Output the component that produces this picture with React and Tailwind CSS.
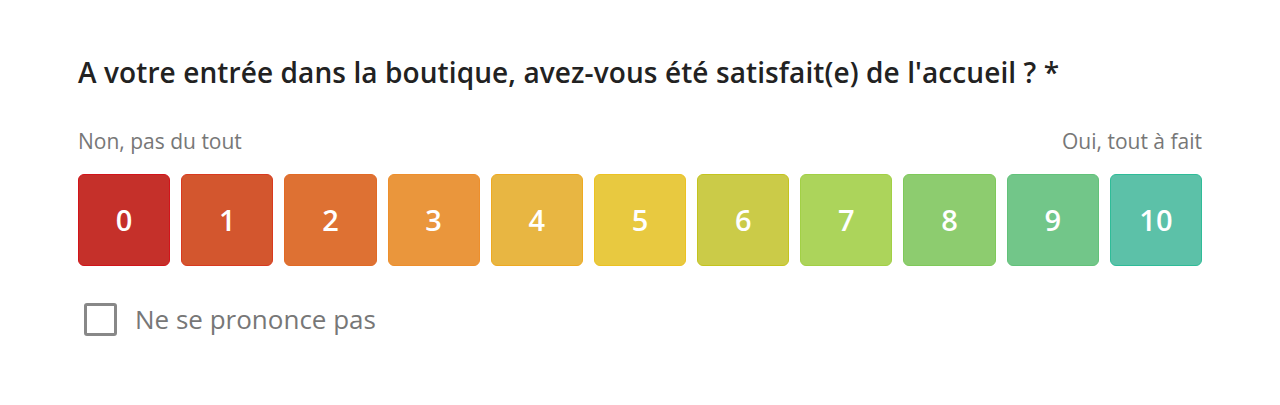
import { useState } from 'react';

const scale = [
  { value: 0, cls: 'bg-[#c5302a] border-[#d2141a]' },
  { value: 1, cls: 'bg-[#d3562e] border-[#d93a1f]' },
  { value: 2, cls: 'bg-[#de7133] border-[#e26a25]' },
  { value: 3, cls: 'bg-[#ea963c] border-[#ee8f2c]' },
  { value: 4, cls: 'bg-[#e8b642] border-[#eeaa22]' },
  { value: 5, cls: 'bg-[#e8c940] border-[#ecc222]' },
  { value: 6, cls: 'bg-[#cbcb48] border-[#c4c41f]' },
  { value: 7, cls: 'bg-[#acd45b] border-[#a2d045]' },
  { value: 8, cls: 'bg-[#8dcc6f] border-[#7fc95a]' },
  { value: 9, cls: 'bg-[#72c689] border-[#62c27a]' },
  { value: 10, cls: 'bg-[#5cc1a8] border-[#2fbc98]' },
];

export default function App() {
  const [selected, setSelected] = useState(null);
  const [noOpinion, setNoOpinion] = useState(false);

  return (
    <div className="w-full min-h-[405px] bg-white font-['Open_Sans','Lato',sans-serif]">
      <div className="px-[78px] pt-[54px]">
        {/* Question */}
        <h2 className="text-[28px] font-semibold text-[#222] leading-[36px] tracking-[0.1px]">
          A votre entrée dans la boutique, avez-vous été satisfait(e) de l'accueil ? *
        </h2>

        {/* Scale labels */}
        <div className="mt-[37px] flex justify-between text-[21px] text-[#777] leading-[28px]">
          <span>Non, pas du tout</span>
          <span>Oui, tout à fait</span>
        </div>

        {/* Scale */}
        <div className="mt-[19px] grid grid-cols-11 gap-[11px]">
          {scale.map((item) => (
            <button
              key={item.value}
              onClick={() => setSelected(item.value)}
              className={`h-[92px] rounded-[6px] border flex items-center justify-center text-white text-[29px] font-semibold ${item.cls} ${selected === item.value ? 'ring-2 ring-[#333]' : ''}`}
            >
              {item.value}
            </button>
          ))}
        </div>

        {/* No opinion */}
        <label className="mt-[36px] ml-[6px] flex items-center gap-[18px] cursor-pointer">
          <span
            onClick={() => setNoOpinion(!noOpinion)}
            className={`w-[33px] h-[33px] rounded-[3px] border-[3px] border-[#888] ${noOpinion ? 'bg-[#888]' : 'bg-white'}`}
          />
          <span className="text-[26px] text-[#777] leading-[34px]">Ne se prononce pas</span>
        </label>
      </div>
    </div>
  );
}
